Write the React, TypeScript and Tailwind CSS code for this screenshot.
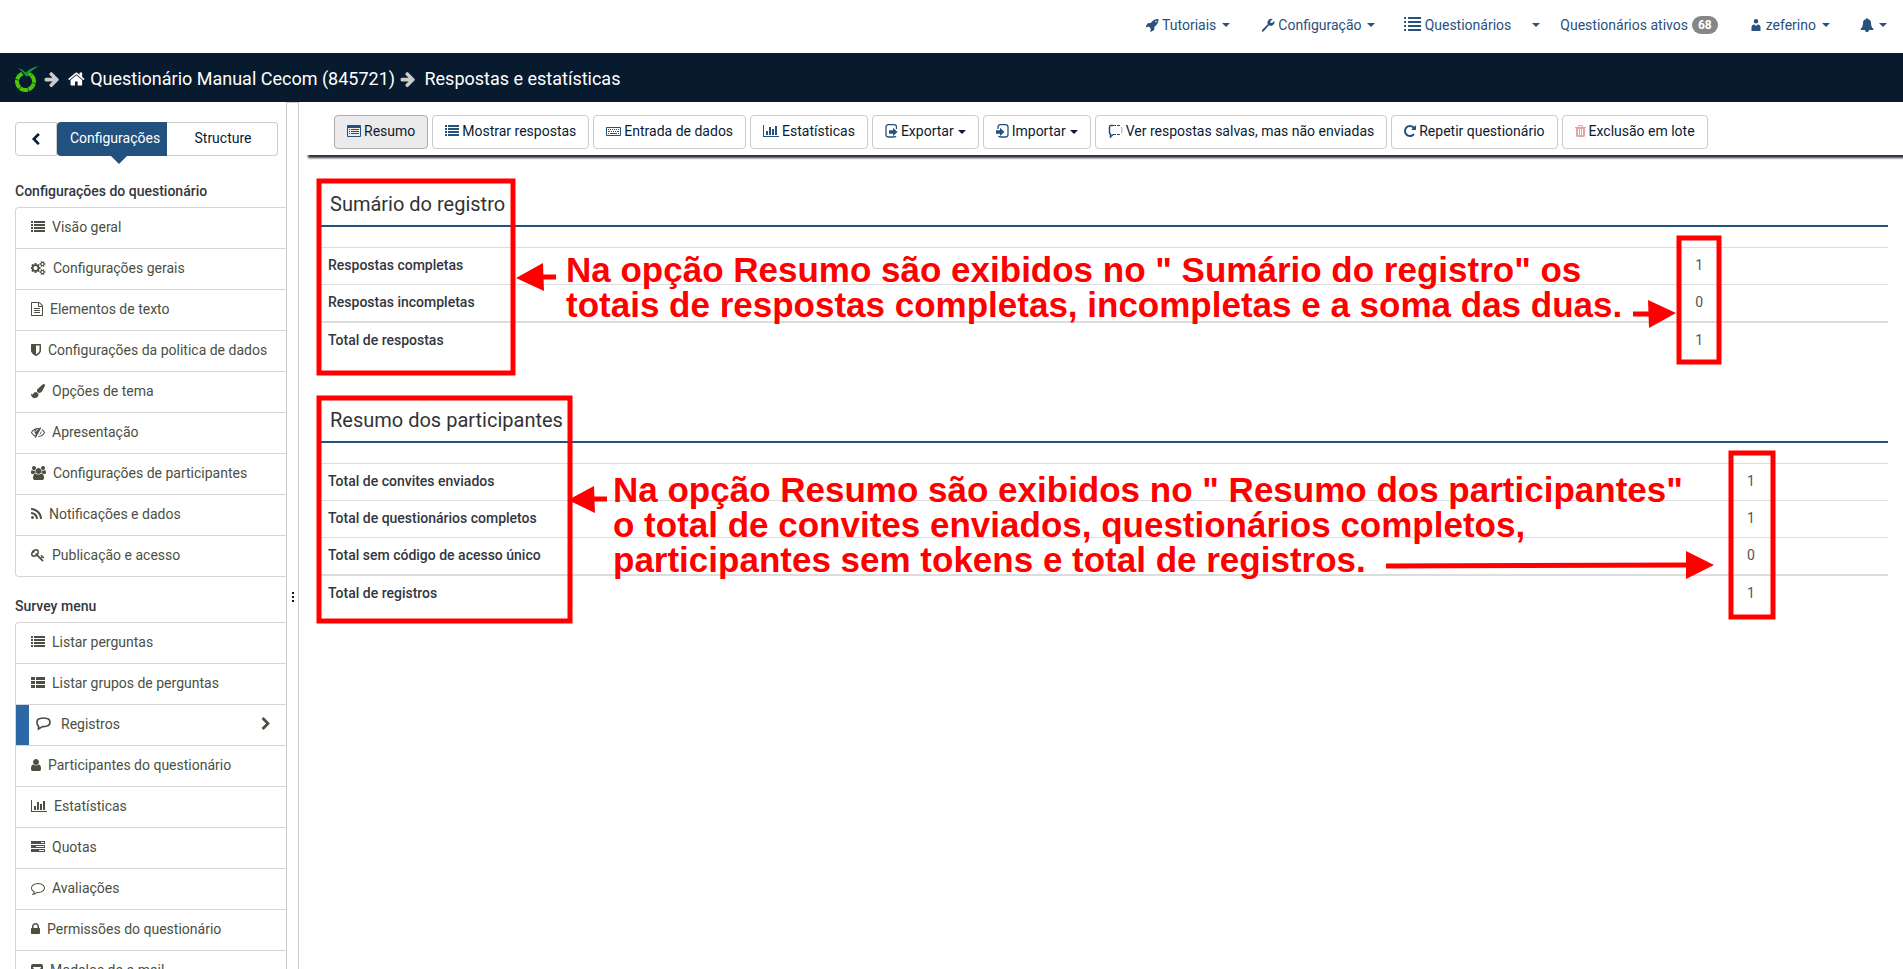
import React from "react";

type IconDef = { box: string; w: number; d: string };

const ICONS = {
  home: { box: "64 0 1664 1792", w: 13, d: "M1472 992v480q0 26-19 45t-45 19h-384v-384h-256v384h-384q-26 0-45-19t-19-45v-480q0-1 .5-3t.5-3l575-474 575 474q1 2 1 6zm223-69l-62 74q-8 9-21 11h-3q-13 0-21-7l-692-577-692 577q-12 8-24 7-13-2-21-11l-62-74q-8-10-7-23.5t11-21.5l719-599q32-26 76-26t76 26l244 204v-195q0-14 9-23t23-9h192q14 0 23 9t9 23v408l219 182q10 8 11 21.5t-7 23.5z" },
  arrow: { box: "64 0 1600 1792", w: 12, d: "M1600 960q0 54-37 91l-651 651q-39 37-91 37-51 0-90-37l-75-75q-38-38-38-91t38-91l293-293h-704q-52 0-84.5-37.5t-32.5-90.5v-128q0-53 32.5-90.5t84.5-37.5h704l-293-294q-38-36-38-90t38-90l75-75q38-38 90-38 53 0 91 38l651 651q37 35 37 90z" },
  list: { box: "0 0 1792 1792", w: 14, d: "M0 1280h256v256H0zM0 896h256v256H0zM0 512h256v256H0zM0 128h256v256H0zM384 1280h1408v256H384zM384 896h1408v256H384zM384 512h1408v256H384zM384 128h1408v256H384z" },
  listThin: { box: "0 0 17 15", w: 16, d: "M0 0h2v2H0zM4 0h13v2H4zM0 4h2v2H0zM4 4h13v2H4zM0 8h2v2H0zM4 8h13v2H4zM0 12h2v2H0zM4 12h13v2H4z" },
  thList: { box: "0 0 1792 1792", w: 14, d: "M0 1152h512v384H0zM0 640h512v384H0zM0 128h512v384H0zM640 1152h1152v384H640zM640 640h1152v384H640zM640 128h1152v384H640z" },
  tasks: { box: "0 0 1792 1792", w: 14, d: "M1024 1408h640v-128h-640zM640 896h1024V768H640zM1280 384h384V256h-384zM0 1152h1792v384H0zM0 640h1792v384H0zM0 128h1792v384H0z" },
  chart: { box: "0 0 2048 1792", w: 16, d: "M640 896v512H384V896zM1024 384v1024H768V384zM2048 1536v128H0V128h128v1408zM1408 640v768h-256V640zM1792 256v1152h-256V256z" },
  wrench: { box: "0 0 14 14", w: 14, d: "M11.800 1.200A3.800 3.800 0 0 0 6.800 6.200L1 12q-.500 1 .300 1.500.700.500 1.400-.200L8 7.300A3.700 3.700 0 0 0 13.300 3L11 5 9.500 4.800 9.300 3.300z" },
  rocket: { box: "64 0 1664 1792", w: 13, d: "M1440 448q0-40-28-68t-68-28-68 28-28 68 28 68 68 28 68-28 28-68zm224-288q0 249-75.5 430.5t-253.5 360.5q-81 80-195 176l-20 379q-2 16-16 26l-384 224q-7 4-16 4-12 0-23-9l-64-64q-13-14-8-32l85-276-281-281-276 85q-3 1-9 1-14 0-23-9l-64-64q-17-19-5-39l224-384q10-14 26-16l379-20q96-114 176-195 188-187 358-258t431-71q14 0 24 9.5t10 22.5z" },
  user: { box: "256 0 1280 1792", w: 10, d: "M1536 1399q0 109-62.5 187t-150.5 78h-854q-88 0-150.5-78t-62.5-187q0-85 8.5-160.5t31.5-152 58.5-131 94-89 134.5-34.5q131 128 313 128t313-128q76 0 134.5 34.5t94 89 58.5 131 31.5 152 8.5 160.5zm-256-887q0 159-112.5 271.5t-271.5 112.5-271.5-112.5-112.5-271.5 112.5-271.5 271.5-112.5 271.5 112.5 112.5 271.5z" },
  person: { box: "0 0 10 14", w: 10, d: "M5 1a2.300 2.300 0 1 1 0 4.600a2.300 2.300 0 1 1 0-4.600zM0.500 13v-3.500q0-3 3-3l1.500 1.500 1.500-1.500q3 0 3 3V13z" },
  lock: { box: "320 0 1152 1792", w: 9, d: "M640 768h512v-192q0-106-75-181t-181-75-181 75-75 181v192zm832 96v576q0 40-28 68t-68 28h-960q-40 0-68-28t-28-68v-576q0-40 28-68t68-28h32v-192q0-184 132-316t316-132 316 132 132 316v192h32q40 0 68 28t28 68z" },
  right: { box: "256 0 1280 1792", w: 10, d: "M1363 877l-742 742q-19 19-45 19t-45-19l-166-166q-19-19-19-45t19-45l531-531-531-531q-19-19-19-45t19-45l166-166q19-19 45-19t45 19l742 742q19 19 19 45t-19 45z" },
  left: { box: "256 0 1280 1792", w: 10, d: "M1427 301l-531 531 531 531q19 19 19 45t-19 45l-166 166q-19 19-45 19t-45-19l-742-742q-19-19-19-45t19-45l742-742q19-19 45-19t45 19l166 166q19 19 19 45t-19 45z" },
  rss: { box: "192 0 1408 1792", w: 11, d: "M576 1344q0 80-56 136t-136 56-136-56-56-136 56-136 136-56 136 56 56 136zm512 123q2 28-17 48-18 21-47 21h-135q-25 0-43-16.5t-20-41.5q-22-229-184.5-391.5t-391.5-184.500q-25-2-41.500-20t-16.500-43v-135q0-29 21-47 17-17 43-17h5q160 13 306 80.5t259 181.5q114 113 181.5 259t80.5 306zm512 2q2 27-18 47-18 20-46 20h-143q-26 0-44.5-17.5t-19.5-42.5q-12-215-101-408.5t-231.5-336-336-231.5-408.5-102q-25-1-42.5-19.5t-17.5-43.5v-143q0-28 20-46 18-18 44-18h3q262 13 501.5 120t425.5 294q187 186 294 425.5t120 501.5z" },
  file: { box: "128 0 1536 1792", w: 12, d: "M1596 380q28 28 48 76t20 88v1152q0 40-28 68t-68 28h-1344q-40 0-68-28t-28-68v-1600q0-40 28-68t68-28h896q40 0 88 20t76 48zm-444-244v376h376q-10-29-22-41l-313-313q-12-12-41-22zm384 1528v-1024h-416q-40 0-68-28t-28-68v-416h-768v1536h1280zm-1024-864q0-14 9-23t23-9h704q14 0 23 9t9 23v64q0 14-9 23t-23 9h-704q-14 0-23-9t-9-23v-64zm736 224q14 0 23 9t9 23v64q0 14-9 23t-23 9h-704q-14 0-23-9t-9-23v-64q0-14 9-23t23-9h704zm0 256q14 0 23 9t9 23v64q0 14-9 23t-23 9h-704q-14 0-23-9t-9-23v-64q0-14 9-23t23-9h704z" },
  shield: { box: "256 0 1280 1792", w: 10, d: "M1344 960v-640h-448v1137q119-63 213-137 235-184 235-360zm192-768v768q0 86-33.5 170.5t-83 150-118 127.5-126.5 103-121 77.5-89.5 49.5-42.5 20q-12 6-26 6t-26-6q-16-7-42.5-20t-89.5-49.5-121-77.5-126.5-103-118-127.5-83-150-33.5-170.5v-768q0-26 19-45t45-19h1152q26 0 45 19t19 45z" },
  comment: { box: "0 0 1792 1792", w: 14, d: "M896 384q-204 0-381.5 69.5t-282 187.5-104.5 255q0 112 71.5 213.5t201.5 175.5l87 50-27 96q-24 91-70 172 152-63 275-171l43-38 57 6q69 8 130 8 204 0 381.5-69.5t282-187.5 104.5-255-104.5-255-282-187.5-381.5-69.5zm896 512q0 174-120 321.5t-326 233-450 85.5q-70 0-145-8-198 175-460 242-49 14-114 22h-5q-15 0-27-10.5t-16-27.5v-1q-3-4-.5-12t2-10 4.5-9.5l6-9 7-8.5 8-9q7-8 31-34.5t34.5-38 31-39.5 32.5-51 27-59 26-76q-157-89-247.5-220t-90.5-281q0-174 120-321.5t326-233 450-85.5 450 85.5 326 233 120 321.5z" },
  brush: { box: "0 0 1792 1792", w: 14, d: "M1615 0q70 0 122.5 46.5t52.5 116.5q0 63-45 151-332 629-465 752-97 91-218 91-126 0-216.5-92.5t-90.5-219.5q0-128 92-212l638-579q59-54 130-54zm-909 1034q39 76 106.5 130t150.5 76l1 71q4 213-129.5 347t-348.5 134q-123 0-218-46.5t-152.5-127.5-86.5-183-29-220q7 5 41 30t62 44.5 59 36.5 46 17q41 0 55-37 25-66 57.5-112.5t69.5-76 88-47.5 103-25.5 125-10.5z" },
  bell: { box: "0 0 1792 1792", w: 14, d: "M1728 1408q0 52-38 90t-90 38h-448q0 106-75 181t-181 75-181-75-75-181h-448q-52 0-90-38t-38-90q50-42 91-88t85-119.5 74.5-158.5 50-206 19.5-260q0-152 117-282.5t307-158.5q-8-19-8-39 0-40 28-68t68-28 68 28 28 68q0 20-8 39 190 28 307 158.5t117 282.5q0 139 19.5 260t50 206 74.5 158.5 85 119.5 91 88z" },
  cogs: { box: "0 0 1920 1792", w: 15, d: "M832 896q0-106-75-181t-181-75-181 75-75 181 75 181 181 75 181-75 75-181zm768 512q0-52-38-90t-90-38-90 38-38 90q0 53 37.5 90.5t90.5 37.5 90.5-37.5 37.5-90.5zm0-1024q0-52-38-90t-90-38-90 38-38 90q0 53 37.5 90.5t90.5 37.5 90.5-37.5 37.5-90.5zm-384 421v185q0 10-7 19.5t-16 10.5l-155 24q-11 35-32 76 34 48 90 115 7 11 7 20 0 12-7 19-23 30-82.5 89.5t-78.5 59.5q-11 0-21-7l-115-90q-37 19-77 31-11 108-23 155-7 24-30 24h-186q-11 0-20-7.5t-10-17.5l-23-153q-34-10-75-31l-118 89q-7 7-20 7-11 0-21-8-144-133-144-160 0-9 7-19 10-14 41-53t47-61q-23-44-35-82l-152-24q-10-1-17-9.5t-7-19.5v-185q0-10 7-19.5t16-10.5l155-24q11-35 32-76-34-48-90-115-7-11-7-20 0-12 7-20 22-30 82-89t79-59q11 0 21 7l115 90q34-18 77-32 11-108 23-154 7-24 30-24h186q11 0 20 7.5t10 17.5l23 153q34 10 75 31l118-89q8-7 20-7 11 0 21 8 144 133 144 160 0 8-7 19-12 16-42 54t-45 60q23 48 34 82l152 23q10 2 17 10.5t7 19.5zm640 533v140q0 16-149 31-12 27-30 52 51 113 51 138 0 4-4 7-122 71-124 71-8 0-46-47t-52-68q-20 2-30 2t-30-2q-14 21-52 68t-46 47q-2 0-124-71-4-3-4-7 0-25 51-138-18-25-30-52-149-15-149-31v-140q0-16 149-31 13-29 30-52-51-113-51-138 0-4 4-7 4-2 35-20t59-34 30-16q8 0 46 46.5t52 67.5q20-2 30-2t30 2q51-71 92-112l6-2q4 0 124 70 4 3 4 7 0 25-51 138 17 23 30 52 149 15 149 31zm0-1024v140q0 16-149 31-12 27-30 52 51 113 51 138 0 4-4 7-122 71-124 71-8 0-46-47t-52-68q-20 2-30 2t-30-2q-14 21-52 68t-46 47q-2 0-124-71-4-3-4-7 0-25 51-138-18-25-30-52-149-15-149-31v-140q0-16 149-31 13-29 30-52-51-113-51-138 0-4 4-7 4-2 35-20t59-34 30-16q8 0 46 46.5t52 67.5q20-2 30-2t30 2q51-71 92-112l6-2q4 0 124 70 4 3 4 7 0 25-51 138 17 23 30 52 149 15 149 31z" },
  users: { box: "0 0 1920 1792", w: 15, d: "M593 896q-162 5-265 128h-134q-82 0-138-40.5t-56-118.5q0-353 124-353 6 0 43.5 21t97.5 42.5 119 21.5q67 0 133-23-5 37-5 66 0 139 81 256zm1071 637q0 120-73 189.5t-194 69.5h-874q-121 0-194-69.5t-73-189.5q0-53 3.500-103.500t14-109 26.500-108.500 43-97.500 62-81 85.500-53.500 111.500-20q10 0 43 21.500t73 48 107 48 135 21.500 135-21.500 107-48 73-48 43-21.500q61 0 111.500 20t85.500 53.500 62 81 43 97.500 26.500 108.500 14 109 3.500 103.500zm-1024-1277q0 106-75 181t-181 75-181-75-75-181 75-181 181-75 181 75 75 181zm704 384q0 159-112.5 271.5t-271.5 112.5-271.5-112.5-112.5-271.5 112.5-271.5 271.5-112.5 271.5 112.5 112.5 271.5zm576 225q0 78-56 118.5t-138 40.5h-134q-103-123-265-128 81-117 81-256 0-29-5-66 66 23 133 23 59 0 119-21.5t97.5-42.5 43.5-21q124 0 124 353zm-128-609q0 106-75 181t-181 75-181-75-75-181 75-181 181-75 181 75 75 181z" },
  key: { box: "0 0 1792 1792", w: 14, d: "M832 512q0-80-56-136t-136-56-136 56-56 136q0 42 19 83-41-19-83-19-80 0-136 56t-56 136 56 136 136 56 136-56 56-136q0-42-19-83 41 19 83 19 80 0 136-56t56-136zm851 704q0 17-49 66t-66 49q-9 0-28.5-16t-36.5-33-38.5-40-24.5-26l-96 96 220 220q28 28 28 68 0 42-39 81t-81 39q-40 0-68-28l-671-671q-176 131-365 131-163 0-265.5-102.5t-102.5-265.5q0-160 95-313t248-248 313-95q163 0 265.5 102.5t102.5 265.5q0 189-131 365l355 355 96-96q-3-3-26-24.5t-40-38.5-33-36.5-16-28.5q0-17 49-66t66-49q13 0 23 10 6 6 46 44.500t82 79.5 86.5 86 73 78 28.5 41z" },
  eye: { box: "0 0 1792 1792", w: 14, d: "M555 1335l78-141q-87-63-136-159t-49-203q0-121 61-225-229 117-381 353 167 258 427 375zm389-759q0-20-14-34t-34-14q-125 0-214.5 89.5t-89.5 214.5q0 20 14 34t34 14 34-14 14-34q0-86 61-147t147-61q20 0 34-14t14-34zm363-191q0 7-1 9-106 189-316 567t-315 566l-49 89q-10 16-28 16-12 0-134-70-16-10-16-28 0-12 44-87-143-65-263.5-173t-208.5-245q-20-31-20-69t20-69q153-235 380-371t496-136q89 0 180 17l54-97q10-16 28-16 5 0 18 6t31 15.5 33 18.5 31.5 18.5 19.5 11.5q16 10 16 27zm37 447q0 139-79 253.5t-209 164.5l280-502q8 45 8 84zm448 128q0 35-20 69-39 64-109 145-150 172-347.5 267t-419.5 95l74-132q212-18 392.5-137t301.5-307q-115-179-282-294l63-112q95 64 182.5 153t144.5 184q20 34 20 69z" },
  trash: { box: "192 0 1408 1792", w: 11, d: "M704 1376v-704q0-14-9-23t-23-9h-64q-14 0-23 9t-9 23v704q0 14 9 23t23 9h64q14 0 23-9t9-23zm256 0v-704q0-14-9-23t-23-9h-64q-14 0-23 9t-9 23v704q0 14 9 23t23 9h64q14 0 23-9t9-23zm256 0v-704q0-14-9-23t-23-9h-64q-14 0-23 9t-9 23v704q0 14 9 23t23 9h64q14 0 23-9t9-23zm-544-992h448l-48-117q-7-9-17-11h-317q-10 2-17 11zm928 32v64q0 14-9 23t-23 9h-96v948q0 83-47 143.5t-113 60.5h-832q-66 0-113-58.5t-47-141.5v-952h-96q-14 0-23-9t-9-23v-64q0-14 9-23t23-9h309l70-167q15-37 54-63t79-26h320q40 0 79 26t54 63l70 167h309q14 0 23 9t9 23z" },
  repeat: { box: "128 0 1536 1792", w: 12, d: "M1664 256v448q0 26-19 45t-45 19h-448q-42 0-59-40-17-39 14-69l138-138q-148-137-349-137-104 0-198.5 40.5t-163.5 109.5-109.5 163.5-40.5 198.5 40.5 198.5 109.5 163.5 163.5 109.5 198.5 40.5q119 0 225-52t179-147q7-10 23-12 15 0 25 9l137 138q9 8 9.5 20.5t-7.5 22.5q-109 132-264 204.5t-327 72.5q-156 0-298-61t-245-164-164-245-61-298 61-298 164-245 245-164 298-61q147 0 284.5 55.500t244.500 156.500l130-129q29-31 70-14 39 17 39 59z" },
  envelope: { box: "0 0 12 14", w: 12, d: "M2 1h8q2 0 2 2v8q0 2-2 2H2q-2 0-2-2V3q0-2 2-2zM2 4v1l4 3 4-3V4zM2 6v4h8V6L6 9z" },
  keyboard: { box: "0 0 15 14", w: 15, d: "M1 3h13q1 0 1 1v7q0 1-1 1H1q-1 0-1-1V4q0-1 1-1zM1 4v7h13V4zM2 5h1v1H2zM4 5h1v1H4zM6 5h1v1H6zM8 5h1v1H8zM10 5h1v1h-1zM12 5h1v1h-1zM2 7h2v1H2zM5 7h1v1H5zM7 7h1v1H7zM9 7h1v1H9zM11 7h2v1h-2zM2 9h1v1H2zM4 9h7v1H4zM12 9h1v1h-1z" },
  listAlt: { box: "0 0 14 14", w: 14, d: "M1 1h12q1 0 1 1v10q0 1-1 1H1q-1 0-1-1V2q0-1 1-1zM1 4v8h12V4zM2 5h1v1H2zM4 5h8v1H4zM2 7h1v1H2zM4 7h8v1H4zM2 9h1v1H2zM4 9h8v1H4z" },
} satisfies Record<string, IconDef>;

type IconName = keyof typeof ICONS;

function Icon({ name, size = 14, className = "" }: { name: IconName; size?: number; className?: string }) {
  const { box, w, d } = ICONS[name];
  return (
    <svg viewBox={box} width={(w * size) / 14} height={size} fill="currentColor" fillRule="evenodd" aria-hidden="true" className={"shrink-0 " + className}>
      <path d={d} />
    </svg>
  );
}

function Caret() {
  return <span className="block h-0 w-0 border-x-4 border-t-4 border-x-transparent border-t-current" />;
}

function Transfer({ out }: { out: boolean }) {
  return (
    <svg viewBox="0 0 13 14" width="13" height="14" fill="none" stroke="currentColor" aria-hidden="true" className="shrink-0">
      {out ? (
        <>
          <path d="M11.500 5V3Q11.500.700 9 .700H3.500Q1 .700 1 3v7.500Q1 13 3.500 13H9q1.500 0 2-.800" strokeWidth="1.300" />
          <path d="M4 6.300h4V3.800L12.500 8 8 12V9.700H4z" fill="currentColor" stroke="none" />
        </>
      ) : (
        <>
          <path d="M2 5V3Q2 .700 4.500.700H9.500Q12 .700 12 3v7.500Q12 13 9.500 13H4.500Q3 13 2.500 12.200" strokeWidth="1.300" />
          <path d="M0 6.300h4V3.800L8.500 8 4 12V9.700H0z" fill="currentColor" stroke="none" />
        </>
      )}
    </svg>
  );
}

function DashedBubble() {
  return (
    <svg viewBox="0 0 15 14" width="15" height="14" fill="none" stroke="currentColor" aria-hidden="true" className="shrink-0">
      <path d="M5 1.500H3Q1.500 1.500 1.500 3v5.500q0 1.500 1 1.500V13L5 10.500" strokeWidth="1.500" />
      <path d="M5 1.500h7M5 10.500h7" strokeDasharray="3 1" />
      <path d="M13.500 3Q14.500 6 13.500 9" strokeOpacity="0.500" />
    </svg>
  );
}

function Bubble() {
  return (
    <svg viewBox="0 0 15 14" width="15" height="14" fill="none" stroke="currentColor" strokeWidth="1.600" aria-hidden="true" className="shrink-0">
      <path d="M4 1.500Q7.500.500 11 1.500 14 2 14 5.200T11 9Q8 9.800 6.500 9.500L2.500 12V9Q1 8.500 1 5.200T4 1.500z" />
    </svg>
  );
}

function Logo() {
  return (
    <svg viewBox="0 0 24 28" width="24" height="28" fill="none" aria-label="LimeSurvey" className="shrink-0">
      <circle cx="10.500" cy="16.500" r="8.500" stroke="#4cc40a" strokeWidth="4" strokeDasharray="8.300 .600" transform="rotate(-48 10.500 16.500)" />
      <path d="M5 5h11l-5 8z" fill="#071a2e" />
      <path d="M3 3l4 1.500 4 3Q15 2.500 24 1q-8 4-12.500 11Q8 6.500 3 3z" fill="#129a37" />
    </svg>
  );
}

const TOP: { icon: IconName; label: string; cls: string }[] = [
  { icon: "rocket", label: "Tutoriais", cls: "mr-[31px]" },
  { icon: "wrench", label: "Configuração", cls: "mr-[29px]" },
];

const SETTINGS: [IconName, string][] = [
  ["list", "Visão geral"],
  ["cogs", "Configurações gerais"],
  ["file", "Elementos de texto"],
  ["shield", "Configurações da politica de dados"],
  ["brush", "Opções de tema"],
  ["eye", "Apresentação"],
  ["users", "Configurações de participantes"],
  ["rss", "Notificações e dados"],
  ["key", "Publicação e acesso"],
];

const SURVEY: [IconName | null, string][] = [
  ["list", "Listar perguntas"],
  ["thList", "Listar grupos de perguntas"],
  [null, "Registros"],
  ["user", "Participantes do questionário"],
  ["chart", "Estatísticas"],
  ["tasks", "Quotas"],
  ["comment", "Avaliações"],
  ["lock", "Permissões do questionário"],
  ["envelope", "Modelos de e-mail"],
];

function Menu({ title, items }: { title: string; items: [IconName | null, string][] }) {
  return (
    <section>
      <h2 className="pb-1.5 font-medium leading-5 text-[#333641]">{title}</h2>
      <ul className="rounded-l border border-r-0 border-[#d5d5d5]">
        {items.map(([icon, label], i) => (
          <li key={label} className={i ? "border-t border-[#d5d5d5]" : ""}>
            {icon ? (
              <a href="#" className="flex h-10 items-center gap-[7px] pb-0.5 pl-[15px] text-[#4b5043]">
                <Icon name={icon} />
                {label}
              </a>
            ) : (
              <a href="#" className="flex h-10 items-center border-l-[13px] border-[#2c67a6] pr-[15px] pb-0.5 pl-[7px] text-[#4b5043]">
                <Bubble />
                <span className="flex-1 pl-2.5">{label}</span>
                <Icon name="right" />
              </a>
            )}
          </li>
        ))}
      </ul>
    </section>
  );
}

function Tool({ icon, label, caret = false, active = false }: { icon: React.ReactNode; label: string; caret?: boolean; active?: boolean }) {
  return (
    <button
      type="button"
      className={
        "flex h-[34px] shrink-0 items-center rounded border px-3 pb-2 pt-1.5 text-[#0b1b33] " +
        (active ? "border-[#adadad] bg-[#ebebeb]" : "border-[#ccc] bg-white")
      }
    >
      <span className="mr-[3px] text-[#25517e]">{icon}</span>
      {label}
      {caret && <span className="mt-0.5 ml-1"><Caret /></span>}
    </button>
  );
}

function Summary({ title, rows, wide }: { title: string; rows: [string, number][]; wide?: boolean }) {
  return (
    <section>
      <h3 className="border-b-2 border-[#24527f] px-2.5 pb-[9px] text-xl leading-6 text-[#333]">{title}</h3>
      <table className="mt-5 w-full table-fixed border-separate border-spacing-0 text-left leading-5">
        <tbody>
          {rows.map(([label, n], i) => {
            const line = i === rows.length - 1 ? "border-t-2 border-[#ddd] " : "border-t border-[#ddd] ";
            return (
              <tr key={label}>
                <th scope="row" className={line + "px-2 pt-[7px] pb-[9px] font-medium text-[#333641] " + (wide ? "w-[90.5%]" : "w-[87.2%]")}>{label}</th>
                <td className={line + "px-2 pt-[7px] pb-[9px] text-[#555]"}>{n}</td>
              </tr>
            );
          })}
        </tbody>
      </table>
    </section>
  );
}

export default function App() {
  return (
    <div className="relative flex h-screen flex-col overflow-hidden bg-white font-[Roboto,sans-serif] text-sm text-[#333]">
      <nav className="flex h-[53px] shrink-0 items-center justify-end pr-4 pb-1 text-[#2a507c]">
        {TOP.map((t) => (
          <a key={t.label} href="#" className={"flex items-center " + t.cls}>
            <Icon name={t.icon} />
            <span className="mr-1.5 ml-[3px]">{t.label}</span>
            <Caret />
          </a>
        ))}
        <a href="#" className="flex items-center">
          <Icon name="listThin" size={15} />
          <span className="ml-[3px]">Questionários</span>
        </a>
        <button type="button" aria-label="Mais" className="mr-5 ml-[21px]"><Caret /></button>
        <a href="#" className="mr-[33px] flex items-center">
          Questionários ativos
          <span className="ml-1 rounded-full bg-[#868686] px-1.5 py-[3px] text-xs leading-3 font-bold text-white">68</span>
        </a>
        <a href="#" className="mr-[30px] flex items-center gap-1.5">
          <span className="flex items-center gap-[5px]"><Icon name="person" />zeferino</span>
          <Caret />
        </a>
        <button type="button" aria-label="Notificações" className="flex items-center gap-[5px]"><Icon name="bell" /><Caret /></button>
      </nav>

      <header className="flex h-[49px] shrink-0 items-center bg-[#071a2e] pt-0.5 pl-[15px] text-lg text-white">
        <Logo />
        <Icon name="arrow" size={18} className="ml-[5px] text-[#ccc]" />
        <a href="#" className="ml-[9px] flex items-center gap-[5px]"><Icon name="home" size={18} />Questionário Manual Cecom (845721)</a>
        <Icon name="arrow" size={18} className="mr-[9px] ml-[5px] text-[#ccc]" />
        <span>Respostas e estatísticas</span>
      </header>

      <div className="flex min-h-0 flex-1">
        <aside className="w-[286px] shrink-0 overflow-hidden pt-5 pl-[15px]">
          <div className="mb-[25px] flex h-[34px] w-[263px]">
            <button type="button" aria-label="Recolher" className="flex w-[42px] items-center justify-center rounded-l border border-[#ccc] text-[#071a2e]"><Icon name="left" size={13} /></button>
            <button type="button" className="relative w-[110px] rounded-l bg-[#22507f] pb-0.5 pl-1.5 text-white">
              Configurações
              <span className="absolute top-full left-[54px] h-0 w-0 border-x-8 border-t-8 border-x-transparent border-t-[#22507f]" />
            </button>
            <button type="button" className="flex-1 rounded-r border border-l-0 border-[#ccc] pb-0.5 pl-0.5 text-[#0b1b33]">Structure</button>
          </div>
          <div className="flex flex-col gap-[19px]">
            <Menu title="Configurações do questionário" items={SETTINGS} />
            <Menu title="Survey menu" items={SURVEY} />
          </div>
        </aside>

        <div className="flex w-[13px] shrink-0 flex-col items-center justify-center gap-0.5 border border-b-0 border-[#ccc] pt-[122px]">
          <span className="size-0.5 bg-[#071a2e]" />
          <span className="size-0.5 bg-[#071a2e]" />
          <span className="size-0.5 bg-[#071a2e]" />
        </div>

        <main className="min-w-0 flex-1 overflow-hidden pt-[7px] pl-1.5">
          <div className="flex h-[46px] gap-1 pt-1.5 pl-[29px] shadow-[3px_3px_2px_#35303f]">
            <Tool icon={<Icon name="listAlt" />} label="Resumo" active />
            <Tool icon={<Icon name="list" />} label="Mostrar respostas" />
            <Tool icon={<Icon name="keyboard" />} label="Entrada de dados" />
            <Tool icon={<Icon name="chart" />} label="Estatísticas" />
            <Tool icon={<Transfer out />} label="Exportar" caret />
            <Tool icon={<Transfer out={false} />} label="Importar" caret />
            <Tool icon={<DashedBubble />} label="Ver respostas salvas, mas não enviadas" />
            <Tool icon={<Icon name="repeat" />} label="Repetir questionário" />
            <Tool icon={<Icon name="trash" className="text-[#e5a5a5]" />} label="Exclusão em lote" />
          </div>
          <div className="flex flex-col gap-[49px] pt-[37px] pr-[15px] pl-[15px]">
            <Summary title="Sumário do registro" rows={[["Respostas completas", 1], ["Respostas incompletas", 0], ["Total de respostas", 1]]} />
            <Summary wide title="Resumo dos participantes" rows={[["Total de convites enviados", 1], ["Total de questionários completos", 1], ["Total sem código de acesso único", 0], ["Total de registros", 1]]} />
          </div>
        </main>
      </div>

      <svg viewBox="0 0 1903 969" width="1903" height="969" aria-hidden="true" className="pointer-events-none absolute top-0 left-0 max-w-none">
        <g fill="none" stroke="#f00" strokeWidth="5">
          <rect x="319" y="181" width="194" height="192" />
          <rect x="319" y="398" width="251" height="223" />
          <rect x="1679" y="238" width="40" height="124" />
          <rect x="1731" y="453" width="42" height="164" />
          <path d="M556 277H540M607 499H590M1633 314H1650M1386 566L1690 565" />
        </g>
        <path fill="#f00" d="M516 278L543 263L544 291zM568 500L594 486L595 513zM1676 313L1648 300L1649 328zM1714 565L1686 551V579z" />
      </svg>
      <p className="absolute top-[252px] left-[566px] font-['Liberation_Sans',Arial,sans-serif] text-[35px] leading-[35px] font-bold whitespace-nowrap text-[#f00]">
        Na opção Resumo são exibidos no " Sumário do registro" os<br />
        totais de respostas completas, incompletas e a soma das duas.
      </p>
      <p className="absolute top-[472px] left-[613px] font-['Liberation_Sans',Arial,sans-serif] text-[35px] leading-[35px] font-bold whitespace-nowrap text-[#f00]">
        Na opção Resumo são exibidos no " Resumo dos participantes"<br />
        o total de convites enviados, questionários completos,<br />
        participantes sem tokens e total de registros.
      </p>
    </div>
  );
}
